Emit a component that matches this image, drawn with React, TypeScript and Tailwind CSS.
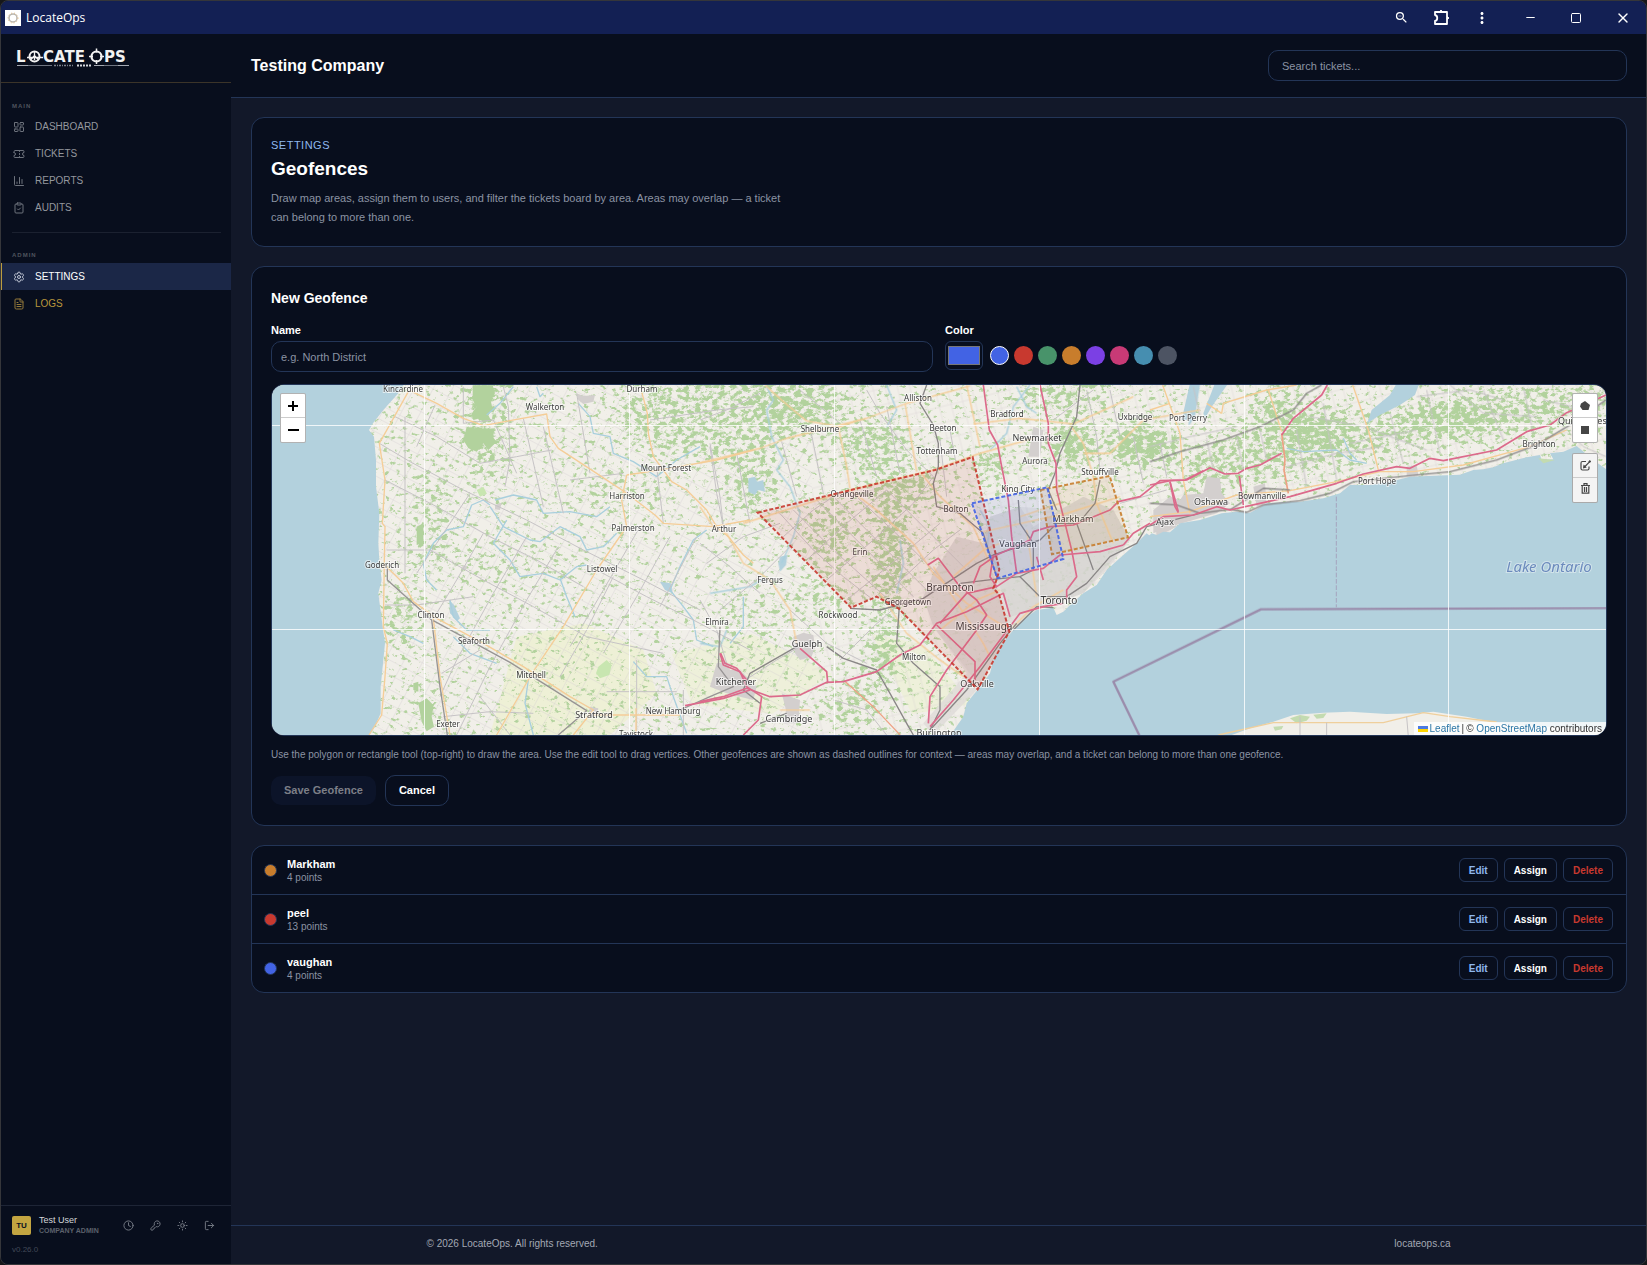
import { useState } from 'react';
import {
  ChartColumn,
  ClipboardCheck,
  Clock,
  FileText,
  KeyRound,
  LayoutDashboard,
  LogOut,
  Minus,
  Settings,
  Square,
  Sun,
  Ticket,
  X,
} from 'lucide-react';
import { MdMoreVert, MdZoomOut } from 'react-icons/md';

const swatches = [
  { name: 'Blue', cls: 'bg-[#4263e4]' },
  { name: 'Red', cls: 'bg-[#c8392f]' },
  { name: 'Green', cls: 'bg-[#48936a]' },
  { name: 'Orange', cls: 'bg-[#c87d2c]' },
  { name: 'Purple', cls: 'bg-[#7b40e4]' },
  { name: 'Pink', cls: 'bg-[#c83a76]' },
  { name: 'Teal', cls: 'bg-[#468eb0]' },
  { name: 'Gray', cls: 'bg-[#4d5463]' },
];

const geofences = [
  { name: 'Markham', points: 4, dot: 'bg-[#c87d2c]' },
  { name: 'peel', points: 13, dot: 'bg-[#c8392f]' },
  { name: 'vaughan', points: 4, dot: 'bg-[#4263e4]' },
];

const mainNav = [
  { label: 'Dashboard', icon: LayoutDashboard },
  { label: 'Tickets', icon: Ticket },
  { label: 'Reports', icon: ChartColumn },
  { label: 'Audits', icon: ClipboardCheck },
];

// [name, x, y, font size]
const places: [string, number, number, number][] = [
  ['Kincardine', 131, 5, 8],
  ['Durham', 370, 5, 8],
  ['Walkerton', 273, 23, 8],
  ['Mount Forest', 394, 84, 8],
  ['Harriston', 355, 112, 8],
  ['Palmerston', 361, 144, 8],
  ['Arthur', 452, 145, 8],
  ['Goderich', 110, 181, 8],
  ['Listowel', 330, 185, 8],
  ['Clinton', 159, 231, 8],
  ['Elmira', 445, 238, 8],
  ['Seaforth', 202, 257, 8],
  ['Mitchell', 259, 291, 8],
  ['Kitchener', 464, 298, 9],
  ['Stratford', 322, 331, 9],
  ['New Hamburg', 401, 327, 8],
  ['Exeter', 176, 340, 8],
  ['Tavistock', 364, 350, 8],
  ['Alliston', 646, 14, 8],
  ['Bradford', 735, 30, 8],
  ['Shelburne', 548, 45, 8],
  ['Beeton', 671, 44, 8],
  ['Newmarket', 765, 54, 9],
  ['Uxbridge', 863, 33, 8],
  ['Port Perry', 916, 34, 8],
  ['Tottenham', 665, 67, 8],
  ['Aurora', 763, 77, 8],
  ['Stouffville', 828, 88, 8],
  ['King City', 746, 105, 8],
  ['Orangeville', 580, 110, 8],
  ['Bolton', 684, 125, 8],
  ['Markham', 801, 135, 9],
  ['Vaughan', 746, 160, 9],
  ['Ajax', 893, 138, 9],
  ['Erin', 588, 168, 8],
  ['Fergus', 498, 196, 8],
  ['Brampton', 678, 204, 10],
  ['Georgetown', 636, 218, 8],
  ['Rockwood', 566, 231, 8],
  ['Toronto', 787, 217, 10],
  ['Mississauga', 712, 243, 10],
  ['Guelph', 535, 260, 9],
  ['Milton', 642, 273, 8],
  ['Oakville', 705, 300, 9],
  ['Cambridge', 517, 335, 9],
  ['Burlington', 667, 349, 9],
  ['Oshawa', 939, 118, 9],
  ['Bowmanville', 990, 112, 8],
  ['Port Hope', 1105, 97, 8],
  ['Brighton', 1267, 60, 8],
  ['Quinte West', 1312, 37, 9],
];

// Each sheet has its own origin, three units to a map pixel.
const WEST = 'scale(0.33333) translate(-66 -372)';
const MID = 'scale(0.33333) translate(1284 -222)';
const EAST = 'scale(0.33333) translate(2634 -42)';

function Roads({ sheet, lines, color, width }: { sheet: string; lines: string[]; color: string; width: number }) {
  return (
    <g transform={sheet} fill="none" stroke={color} strokeWidth={width} strokeLinejoin="round">
      {lines.map((l) => (
        <polyline key={l} points={l} />
      ))}
    </g>
  );
}

const westOrange = [
  '475,395 388,550 405,660 397,790 405,800 403,900 400,1100 412,1150 405,1250 395,1365 357,1425',
  '480,392 560,430 640,475 700,497 800,478 890,462 900,530 925,565 1040,640 1130,700 1215,765 1240,790 1390,800 1500,780',
  '1175,395 1192,460 1195,520 1210,590 1240,630 1265,665 1310,690 1370,750 1400,800 1435,830 1480,885 1510,910',
  '1130,645 1240,628 1400,600 1510,570',
  '1130,645 1115,720 1130,800 1040,930 940,1100 843,1245 740,1425',
  '410,920 460,970 490,1025 560,1075 700,1150 820,1220 960,1310 1030,1350 970,1425',
  '550,1075 570,1250 600,1425',
  '1030,1365 1290,1365',
  '1158,1345 1158,1425',
];
const westGray = [
  '640,380 640,490 730,480 800,640',
  '435,470 560,530 690,610 800,590 905,570',
  '388,550 480,605 640,690 830,780 1000,870 1180,960 1350,1050',
  '405,660 560,740 720,830 860,900 1000,980',
  '820,475 880,740',
  '880,500 940,760',
  '980,400 1020,640',
  '760,380 775,440 780,600 765,680',
  '555,435 500,560',
  '660,700 560,850 500,940',
  '700,820 620,960 560,1060',
  '830,830 730,1000 620,1200 570,1310',
  '925,860 830,1020 720,1220 620,1425',
  '1040,930 1190,1010 1330,1080 1500,1170',
  '540,870 700,960 850,1040 1010,1130 1240,1180',
  '405,1035 500,1035 670,1010',
  '410,870 540,870',
  '465,470 465,940',
  '1170,800 1060,990 960,1160',
  '1260,830 1160,1010 1060,1180',
  '1340,830 1230,1040',
  '690,1310 780,1425',
  '1090,950 1010,1110 930,1250',
  '1380,560 1400,700 1420,800',
  '1160,1200 1160,1420',
  '1220,620 1240,790',
  '960,660 1120,640',
  '1070,1295 1280,1295',
  '575,1240 690,1170',
  '1300,1290 1300,1425',
  '580,1370 720,1355 850,1360',
  '1200,480 1400,450 1510,440',
];
const westRail = [
  '412,925 412,960 545,1080 570,1280 592,1425',
  '550,1082 780,1207 1010,1352 925,1425',
  '1410,1100 1405,1220 1450,1280 1380,1310 1290,1350',
];
const westRivers = [
  '720,735 700,720 665,735 640,800 590,810 550,850 520,910 530,960 560,990',
  '720,740 760,800 840,840 870,845 930,800 990,830 1010,870 1060,860 1100,820',
  '735,720 790,705 860,720 880,760 960,755 1040,770 1080,740',
  '770,780 730,850 780,900 810,950 880,940 930,960 980,920 1010,915',
  '860,380 870,410 880,400',
  '985,430 1020,470 1030,520 1080,530 1090,580 1150,605 1220,650 1280,600 1350,560',
  '790,380 750,430 710,465',
  '1370,810 1330,840 1290,920 1260,990 1300,1040 1330,1080 1340,1140 1390,1160',
  '930,955 950,1010 975,1070',
  '600,1020 610,1070 650,1110 720,1110',
  '430,1110 480,1130 520,1150',
  '610,1130 660,1180 740,1210',
  '835,1260 825,1330 850,1425',
  '1150,1205 1190,1250 1250,1250 1270,1310 1310,1420',
  '1480,1010 1480,1100 1440,1150',
];

const midOrange = [
  '195,225 250,275 320,333 420,350 480,330',
  '0,458 180,415 260,385 500,325 620,280 810,228',
  '415,350 440,470 450,535',
  '615,280 650,485',
  '800,225 840,410',
  '820,342 960,325 1120,342 1300,260',
  '130,640 450,540 700,480 840,430 1000,385',
  '0,590 40,650 80,670 130,760 210,810 270,900 290,1000',
  '450,540 530,600 640,700 700,790 800,880 930,960',
  '660,485 720,560 820,650 870,760',
  '540,850 620,970 720,1050 790,1100',
  '850,665 1100,610 1260,560',
  '1150,430 1230,430 1330,330 1500,300',
  '1110,345 1150,400 1180,500 1190,580 1240,700',
  '720,960 830,870 900,840',
  '760,800 850,720 900,700',
  '700,770 850,1000 870,1040',
  '930,960 1000,890 1090,840',
  '980,660 1010,860',
  '960,620 1080,580',
  '240,1200 330,1200',
];
const midGray = [
  '0,330 80,300 180,250',
  '30,400 60,560 70,650',
  '110,430 150,640',
  '245,395 290,560',
  '330,350 370,550',
  '480,330 530,500',
  '560,290 600,490',
  '300,240 420,340',
  '500,240 540,310 620,420 700,500',
  '0,700 90,770 180,850',
  '20,760 130,680 240,640',
  '60,900 180,800 280,700',
  '230,600 340,720 430,800 520,870',
  '280,600 400,720 600,900',
  '350,570 480,700 640,860',
  '400,560 560,720 690,850',
  '470,560 620,700 740,820',
  '560,540 700,680 800,780',
  '250,680 340,600 400,560',
  '320,750 440,640 560,540',
  '380,810 520,690 640,580 700,500',
  '440,870 600,740 720,640',
  '560,850 700,720 780,660',
  '750,360 770,470',
  '720,390 740,560',
  '1160,240 1190,380 1200,480',
  '1230,240 1260,380',
  '1300,380 1330,520',
  '1380,400 1400,500',
  '1260,580 1400,540',
  '1060,330 1180,240',
  '0,870 50,960 80,1060',
  '120,1120 230,1050 300,1010',
  '270,900 380,1000 500,1060',
  '420,1050 520,950 600,880',
  '400,1170 500,1200 560,1275',
];
const midRail = [
  '680,225 660,280 700,345 715,400 715,470 700,520 710,590 780,610 850,670 880,770 892,805',
  '1140,225 1130,320 1080,430 1065,490 1045,540 1070,600',
  '955,570 960,640 1000,700 1000,780 960,800 1020,860 1100,860 1160,820 1230,740 1310,700 1340,650 1500,610',
  '380,1010 430,1045 530,1080 570,1150 620,1240 640,1275',
  '598,890 590,1000 640,1060 720,1130 720,1200 690,1260',
  '450,895 540,900 670,865 830,760 880,735 1020,690 1060,650',
  '1060,640 1130,640 1180,780',
  '1135,640 1185,580 1200,510',
  '780,820 880,808 960,800',
  '940,960 1010,890 1060,893',
  '690,1260 800,1140 900,1000 950,940',
  '180,1180 130,1140 150,1090 290,1010',
  '260,1210 180,1240',
];
const midPink = [
  '850,225 868,360 893,405 905,470 925,570 935,680 950,790',
  '1020,225 1045,340 1045,400 1068,460 1070,540 1090,620 1115,720 1130,800 1100,840 1100,870',
  '1510,482 1455,510 1380,512 1320,560 1255,575 1230,600 1120,645 1050,650 1000,665 990,690 890,735 840,770 820,820',
  '1270,705 1200,725 1080,735 1030,775 950,790 890,830 870,800 880,735',
  '1270,705 1300,670 1350,640',
  '0,1175 70,1160 140,1135 210,1160 300,1155 380,1117 430,1115 530,1085 600,1035 660,1005 710,940 800,905 910,850 930,920',
  '60,1030 70,1065 120,1085 140,1130 185,1160 175,1230 130,1275',
  '300,1015 380,1085 383,1117',
  '683,765 715,745 780,830 830,870 860,915 830,960 740,1080 690,1160 685,1240',
  '690,1250 760,1170 840,1070 900,990 960,910 1030,890 1090,880',
  '710,945 825,1055 825,1110',
  '890,830 800,850 720,940',
  '1010,740 1030,810',
  '1410,515 1435,605',
];
const midRivers = [
  '200,230 220,270 200,300 215,380 250,450 230,480 270,530 300,610 280,680 245,760',
  '560,225 590,300 560,350',
  '870,420 920,370 940,290 990,225',
  '950,230 980,290 1010,310',
  '600,690 610,760 590,850',
  '0,1000 60,1010 80,960',
  '30,850 150,830 200,800',
  '840,600 870,650 860,720 900,780',
];

const eastOrange = [
  '38,45 90,190 100,330 120,430',
  '0,120 60,100',
  '215,130 220,100 350,60 440,45',
  '355,60 395,185',
  '608,45 655,180 685,300',
  '0,440 120,425 260,375 420,362 560,335 690,305 790,305 940,285 1140,230 1250,180',
  '170,100 215,130',
];
const eastGray = [
  '130,50 150,140',
  '170,210 190,300',
  '0,230 120,200 260,170',
  '260,200 280,300',
  '330,180 350,270',
  '440,180 470,350',
  '520,100 560,330',
  '410,290 560,250 700,230',
  '480,140 640,170 830,240',
  '720,130 760,280',
  '830,60 870,250',
  '900,45 1000,130 1160,140',
  '800,80 960,60 1060,90',
  '1000,60 1060,210',
  '1120,50 1150,190',
  '1180,90 1350,130',
  '1260,190 1300,230 1368,260',
  '600,220 800,180',
];
const eastRail = [
  '0,275 90,245 220,210 330,170 430,120 470,70 515,45',
  '0,400 80,405 150,430 240,418 290,427 340,405 450,392 540,370 610,335 770,318 900,305 1040,270 1160,225 1260,165 1368,90',
  '240,420 340,355 420,360',
];
const eastPink = [
  '0,345 60,332 110,330 180,293 225,312 265,310 290,295 330,285 395,250',
  '532,45 515,75 430,145 395,195',
  '60,335 75,410 85,428',
  '268,318 280,405',
  '0,465 40,440 130,435 200,410 240,420 330,400 420,380 560,340 640,312 740,290 780,295 840,265 880,272 1040,240 1130,185 1200,165 1250,128 1368,75',
];

function MapCanvas() {
  return (
    <svg
      viewBox="0 1 1334 350"
      preserveAspectRatio="xMidYMid slice"
      className="block h-full w-full"
      role="img"
      aria-label="Map of southern Ontario"
    >
      <defs>
        {/* turns soft density shapes into speckled woodland */}
        <filter id="woods" x="0" y="0" width="1334" height="352" filterUnits="userSpaceOnUse" colorInterpolationFilters="sRGB">
          <feTurbulence type="fractalNoise" baseFrequency="0.17 0.23" numOctaves="4" seed="8" result="noise" />
          <feColorMatrix in="noise" type="matrix" values="0 0 0 0 0  0 0 0 0 0  0 0 0 0 0  1 0 0 0 0" result="n" />
          <feComposite in="n" in2="SourceAlpha" operator="arithmetic" k1="0" k2="1" k3="0.34" k4="0" result="sum" />
          <feColorMatrix in="sum" type="matrix" values="0 0 0 0 0.698  0 0 0 0 0.824  0 0 0 0 0.616  0 0 0 7 -4.5" />
        </filter>
        <filter id="soft" x="-50%" y="-50%" width="200%" height="200%">
          <feGaussianBlur stdDeviation="10" />
        </filter>
        <pattern id="farm" width="17" height="13" patternUnits="userSpaceOnUse" patternTransform="rotate(28)">
          <path d="M0 6.5h17M8.5 0v13" stroke="#d2cdd0" strokeWidth="0.5" fill="none" />
        </pattern>
        <pattern id="farmEast" width="12" height="16" patternUnits="userSpaceOnUse" patternTransform="rotate(-14)">
          <path d="M0 8h12M6 0v16" stroke="#d2cdd0" strokeWidth="0.5" fill="none" />
        </pattern>
        <pattern id="streets" width="5" height="5" patternUnits="userSpaceOnUse" patternTransform="rotate(-15)">
          <path d="M0 2.5h5M2.5 0v5" stroke="#bdb9b9" strokeWidth="0.6" fill="none" />
        </pattern>
        <pattern id="streetsPeel" width="6" height="5" patternUnits="userSpaceOnUse" patternTransform="rotate(42)">
          <path d="M0 2.5h6M3 0v5" stroke="#bdb9b9" strokeWidth="0.6" fill="none" />
        </pattern>
      </defs>

      <rect width="1334" height="352" fill="#f1efe9" />
      <path transform={WEST} fill="#eef0d6" d="M800 1130L1000 1090L1180 1170L1220 1300L1080 1425H720Z" />
      <path fill="#eef0d6" d="M400 270L480 250L560 290L500 330L420 320Z M600 250L650 260L700 320L640 330Z" opacity="0.8" />

      <rect width="540" height="352" fill="url(#farm)" opacity="0.7" />
      <rect x="540" width="794" height="352" fill="url(#farmEast)" opacity="0.7" />

      <g filter="url(#woods)">
        <rect width="1334" height="352" fill="#000" opacity="0.12" />
        <g filter="url(#soft)">
          <ellipse cx="440" cy="30" rx="100" ry="45" opacity="0.5" />
          <ellipse cx="215" cy="40" rx="24" ry="60" opacity="0.5" />
          <ellipse cx="160" cy="140" rx="18" ry="60" opacity="0.4" />
          <ellipse cx="240" cy="180" rx="70" ry="20" opacity="0.2" />
          <ellipse cx="350" cy="110" rx="50" ry="20" opacity="0.3" />
          <ellipse cx="480" cy="100" rx="22" ry="32" opacity="0.6" />
          <ellipse cx="530" cy="20" rx="50" ry="26" opacity="0.6" />
          <ellipse cx="600" cy="60" rx="40" ry="26" opacity="0.6" />
          <ellipse cx="630" cy="105" rx="40" ry="14" opacity="0.8" />
          <ellipse cx="618" cy="170" rx="14" ry="56" opacity="0.9" />
          <ellipse cx="560" cy="150" rx="24" ry="34" opacity="0.6" />
          <ellipse cx="612" cy="265" rx="12" ry="40" opacity="0.9" />
          <ellipse cx="580" cy="320" rx="30" ry="24" opacity="0.5" />
          <ellipse cx="550" cy="215" rx="30" ry="14" opacity="0.5" />
          <ellipse cx="480" cy="240" rx="40" ry="40" opacity="0.2" />
          <ellipse cx="800" cy="60" rx="24" ry="20" opacity="1" />
          <ellipse cx="870" cy="60" rx="36" ry="20" opacity="1" />
          <ellipse cx="720" cy="80" rx="16" ry="16" opacity="0.8" />
          <ellipse cx="790" cy="10" rx="50" ry="20" opacity="0.5" />
          <path d="M900 80L1000 20L1100 30L1250 0H1334V40L1150 60L1030 90L920 110Z" opacity="0.55" />
          <ellipse cx="1040" cy="46" rx="34" ry="16" opacity="1" />
          <ellipse cx="1180" cy="34" rx="50" ry="12" opacity="1" />
          <ellipse cx="1000" cy="20" rx="20" ry="12" opacity="0.8" />
          <ellipse cx="1040" cy="338" rx="40" ry="9" opacity="0.5" />
          <ellipse cx="130" cy="235" rx="12" ry="30" opacity="0.7" />
          <ellipse cx="155" cy="325" rx="6" ry="20" opacity="0.8" />
        </g>
      </g>
      <path
        transform={WEST}
        fill="#b2d29d"
        d="M668 376H728L735 400L722 420L728 450L715 465L722 480L700 490L690 475L670 480L664 462L680 440L668 420Z M650 500L690 508L735 505L728 530L740 545L715 570L700 550L680 575L655 565L640 540Z M490 1270L505 1265L505 1295L490 1290Z M505 1330L530 1315L550 1335L545 1370L552 1400L530 1414L515 1385Z M500 800L520 790L520 850L500 855Z"
      />
      <path transform={WEST} fill="#c8e6b0" d="M1045 1220L1070 1200L1085 1215L1078 1245L1050 1255L1038 1240Z M680 690L700 680L710 700L690 710Z" />

      {/* built-up areas */}
      <g>
        <path
          transform={MID}
          fill="#dfdbd8"
          opacity="0.8"
          d="M850 700L870 620L960 590L1000 650L1080 600L1150 560L1240 600L1290 690L1220 780L1150 850L1010 900L940 960L880 1050L840 1130L700 1275L670 1240L800 1090L700 950L670 860L700 790L770 680Z"
        />
        <path transform={MID} fill="url(#streets)" d="M850 700L870 620L960 590L1080 600L1150 560L1240 600L1290 690L1150 850L1010 900L930 920L890 800Z" />
        <path transform={MID} fill="url(#streetsPeel)" d="M770 680L850 700L930 960L840 1130L700 950L670 860L700 790Z" />
        <path transform={MID} fill="#d3cfce" d="M50 1060L80 1055L90 1080L120 1080L170 1130L160 1170L120 1160L80 1150L30 1130Z M280 980L310 968L340 975L345 1010L335 1040L300 1050L285 1030Z M245 1150L270 1160L300 1170L295 1240L250 1240L258 1200Z M1000 350L1030 360L1020 440L985 440Z M1365 630L1420 600L1430 650L1370 680Z" />
        <path transform={EAST} fill="#d3cfce" d="M10 420L60 380L90 390L100 375L160 370L170 320L210 325L215 370L240 400L200 430L60 470L10 490Z M310 350L345 340L350 400L320 410Z M770 290L800 285L805 315L770 318Z" />
        <path transform={WEST} fill="#d3cfce" d="M980 400L1000 408L1035 405L1030 425L1000 432L985 420Z M735 735L755 728L750 750L735 748Z M1020 1340L1045 1345L1040 1375L1015 1370Z M638 915L652 918L648 930L636 928Z" />
      </g>

      <g fill="#b3d1dd">
        <path
          transform={WEST}
          d="M60 368H465L445 400L400 450L370 488L357 510L372 530L378 600L378 680L388 760L385 850L388 900L395 960L385 1000L398 1100L405 1150L400 1200L392 1280L392 1360L375 1400L355 1430H60Z"
        />
        <path
          transform={MID}
          d="M745 1285L790 1220L800 1180L840 1130L870 1090L880 1050L900 1010L940 960L975 925L1010 900L1060 893L1070 915L1090 905L1105 890L1150 850L1190 825L1220 780L1270 735L1310 700L1340 670L1362 687L1362 1285Z"
        />
        <path
          transform={EAST}
          d="M-10 503L5 490L20 495L40 485L60 487L90 460L150 450L215 430L260 425L300 428L320 418L350 400L420 395L450 395L520 385L570 370L600 345L660 345L720 335L780 320L850 317L930 314L970 300L1000 298L1030 292L1060 280L1130 262L1170 255L1175 270L1210 268L1200 250L1240 245L1280 228L1330 270L1372 300V1110H-10Z"
        />
        <path transform={EAST} d="M120 40H145L125 110L110 150L95 150Z M195 40H235L185 110L165 145L160 130Z M740 40H808L795 75L750 105L690 135L652 160L665 120L720 75Z" />
        <path transform={MID} d="M145 505L165 500L172 515L190 510L195 545L175 540L165 555L145 545Z M240 740L262 735L258 765L240 785L235 760Z M1475 225H1500L1485 320L1465 350Z" />
        <path transform={WEST} d="M598 1020L612 1035L630 1075L622 1082L600 1060Z M1230 965L1262 970L1268 1000L1245 990Z" />
      </g>
      <path
        transform={EAST}
        fill="#f1efe9"
        d="M205 1110L300 1075L370 1055L430 1035L520 1028L600 1025L710 1032L800 1030L850 1025L950 1040L1040 1058L1140 1068L1372 1080V1110Z"
      />
      <path transform={EAST} fill="#c3dbb0" d="M420 1045L450 1035L480 1040L470 1052L440 1060Z M490 1034L530 1030L520 1044L500 1046Z M370 1070L400 1068L395 1078L375 1082Z M1165 265L1215 270L1180 280Z" />

      <Roads sheet={WEST} lines={westRivers} color="#a9cfdd" width={4} />
      <Roads sheet={MID} lines={midRivers} color="#a9cfdd" width={4} />
      <Roads sheet={EAST} lines={['410,235 460,245 560,240 600,270 650,280', '580,205 600,250 620,270']} color="#a9cfdd" width={4} />
      <Roads sheet={WEST} lines={westGray} color="#c6c3c5" width={3} />
      <Roads sheet={MID} lines={midGray} color="#c6c3c5" width={3} />
      <Roads sheet={EAST} lines={eastGray} color="#c6c3c5" width={3} />
      <Roads sheet={WEST} lines={westOrange} color="#f5cd97" width={4} />
      <Roads sheet={MID} lines={midOrange} color="#f5cd97" width={4} />
      <Roads sheet={EAST} lines={eastOrange} color="#f5cd97" width={4} />
      <Roads sheet={EAST} lines={['205,1095 370,1058 700,1058 820,1028 900,1040 1040,1056']} color="#efcf9c" width={4} />
      <Roads sheet={EAST} lines={['450,1040 450,1100', '530,1058 530,1100', '770,1040 775,1100']} color="#c6c3c5" width={3} />
      <Roads sheet={MID} lines={['436,1115 520,1190 605,1280']} color="#eea184" width={4} />
      <Roads sheet={EAST} lines={['395,190 405,270 402,300 415,370']} color="#eea184" width={5} />
      <Roads sheet={WEST} lines={westRail} color="#979494" width={4} />
      <Roads sheet={MID} lines={midRail} color="#898686" width={4} />
      <Roads sheet={EAST} lines={eastRail} color="#898686" width={4} />
      <Roads sheet={WEST} lines={['1412,1180 1425,1210 1460,1225 1490,1260', '1305,1337 1420,1315 1500,1290']} color="#dc6a8b" width={5} />
      <Roads sheet={MID} lines={midPink} color="#dc6a8b" width={5} />
      <Roads sheet={EAST} lines={eastPink} color="#dc6a8b" width={5} />

      {/* borders on the lake */}
      <Roads sheet={EAST} lines={['-30,1100 -110,935 333,718 1372,714']} color="#9b8dac" width={7} />
      <path transform={EAST} d="M559 380V712" stroke="#9b8dac" strokeWidth="2" strokeDasharray="14 5" />

      {/* tile seams */}
      <path
        d="M152.500 0V352M357.500 0V352M562.500 0V352M767.500 0V352M972.500 0V352M1176.500 0V352M0 41.500H1334M0 245.500H1334"
        stroke="#fff"
        strokeOpacity="0.8"
        fill="none"
      />

      <g
        fontFamily='"Noto Sans", sans-serif'
        textAnchor="middle"
        fill="#3c3c3c"
        stroke="#fff"
        strokeOpacity="0.6"
        strokeWidth="2"
        paintOrder="stroke"
      >
        {places.map(([name, x, y, size]) => (
          <text key={name + x} x={x} y={y + 3} fontSize={size}>
            {name}
          </text>
        ))}
        <text x="1277" y="188" fontSize="15" fontStyle="italic" fill="#6c8bbd" strokeOpacity="0.4">
          Lake Ontario
        </text>
      </g>

      <g transform={MID} strokeWidth="6" strokeDasharray="12 6" fillOpacity="0.1" strokeOpacity="0.9">
        <polygon points="1022,540 1229,498 1284,682 1056,733" stroke="#c87d2c" fill="#c87d2c" />
        <polygon
          points="173,608 535,520 705,480 818,441 898,778 892,803 880,835 897,853 928,965 833,1138 595,895 530,860 453,893"
          stroke="#c8392f"
          fill="#c8392f"
        />
        <polygon points="816,580 1042,532 1090,747 892,805" stroke="#4263e4" fill="#4263e4" />
      </g>
    </svg>
  );
}

function Logo() {
  return (
    <svg
      width="114"
      height="20"
      viewBox="0 0 114 20"
      className="overflow-visible"
      aria-label="LocateOps"
      role="img"
      fill="none"
      stroke="#f2f2f2"
    >
      <g fill="#f2f2f2" stroke="none" fontFamily='"DejaVu Sans", sans-serif' fontWeight="700" fontSize="15">
        <text x="0" y="14">
          L
        </text>
        <text x="27" y="14">
          CATE
        </text>
        <text x="88" y="14">
          PS
        </text>
      </g>
      <circle cx="18.500" cy="8.500" r="5" strokeWidth="2" />
      <path d="M11 9.500H27M18.500 4V12M15 11.500L18.500 7.500L22 11.500" strokeWidth="1.300" />
      <circle cx="80.500" cy="8.500" r="5" strokeWidth="2.200" />
      <path d="M80.500 0.500V4.500M80.500 12V16M73 8.500H77M84 8.500H88" strokeWidth="1.500" />
      <path d="M1 17.500H12M78 17.500H88M102 17.500H113" stroke="#a5a9b2" />
      <path d="M12 17.500H36M88 17.500H102" stroke="#6f7582" />
      <path d="M38 17.500H58" stroke="#7d828e" strokeWidth="1.500" strokeDasharray="2 1 1 1" />
      <path d="M61 17.500H76" stroke="#d5d8dd" strokeWidth="2" strokeDasharray="2 1" />
    </svg>
  );
}

function NavItem({ label, icon: Icon }: { label: string; icon: any }) {
  return (
    <a href="#" className="flex h-[27px] items-center gap-[10px] pl-3 text-[10px] uppercase text-[#94979d]">
      <Icon size={12} strokeWidth={2} className="text-[#6d727c]" />
      {label}
    </a>
  );
}

function Sidebar() {
  return (
    <aside className="flex w-[230px] shrink-0 flex-col bg-[#080e1d]">
      <div className="flex h-[49px] items-center border-b border-[#3b3429] pl-[15px]">
        <Logo />
      </div>
      <nav className="flex-1 pt-[18px]">
        <p className="mb-[2px] pl-[11px] text-[6px] leading-[10px] font-bold tracking-[1px] text-[#4f545e]">MAIN</p>
        {mainNav.map((n) => (
          <NavItem key={n.label} label={n.label} icon={n.icon} />
        ))}
        <hr className="mt-[11px] mr-[10px] mb-[17px] ml-[11px] border-[#1b2130]" />
        <p className="mb-[3px] pl-[11px] text-[6px] leading-[10px] font-bold tracking-[1px] text-[#4f545e]">ADMIN</p>
        <a
          href="#"
          aria-current="page"
          className="flex h-[27px] items-center gap-[10px] border-l border-[#bb9c40] bg-[#1b2747] pl-[11px] text-[10px] text-white"
        >
          <Settings size={12} strokeWidth={2} className="text-[#c0c6d4]" />
          SETTINGS
        </a>
        <a href="#" className="flex h-[27px] items-center gap-[10px] pl-3 text-[10px] text-[#b8963c]">
          <FileText size={12} strokeWidth={2} className="text-[#94793a]" />
          LOGS
        </a>
      </nav>
      <div className="border-t border-[#1e2536] pt-[9px] pb-[9px] pl-[11px]">
        <div className="flex items-center">
          <span className="flex h-[19px] w-[19px] items-center justify-center rounded-xs bg-[#c3a541] text-[8px] font-bold text-[#0c1222]">
            TU
          </span>
          <div className="ml-2 w-[76px]">
            <p className="text-[9px] leading-[11px] text-[#d5d7da]">Test User</p>
            <p className="text-[7px] leading-[10px] font-bold whitespace-nowrap text-[#5c616c]">COMPANY ADMIN</p>
          </div>
          <div className="ml-2 flex gap-4 text-[#7b808a]">
            <button aria-label="History">
              <Clock size={11} strokeWidth={2} />
            </button>
            <button aria-label="Change password">
              <KeyRound size={11} strokeWidth={2} />
            </button>
            <button aria-label="Toggle theme">
              <Sun size={11} strokeWidth={2} />
            </button>
            <button aria-label="Sign out">
              <LogOut size={11} strokeWidth={2} />
            </button>
          </div>
        </div>
        <p className="mt-[9px] text-[8px] leading-[10px] text-[#424957]">v0.26.0</p>
      </div>
    </aside>
  );
}

export default function App() {
  const [name, setName] = useState('');
  const [selected, setSelected] = useState('Blue');

  return (
    <div className="bg-[#16171a]">
      <div className="flex min-h-screen flex-col overflow-hidden rounded-lg border border-[#35363a] bg-[#121829] font-['Liberation_Sans',Arial,sans-serif] text-white">
        <div className="flex h-[33px] shrink-0 items-center bg-[#132054] pl-1">
          <span className="flex h-4 w-4 items-center justify-center bg-white">
            <svg width="12" height="12" viewBox="0 0 12 12" fill="none">
              <circle cx="6" cy="6" r="4" stroke="#b9b5ae" strokeWidth="1.500" />
              <circle cx="6" cy="6" r="5" stroke="#e0b982" strokeWidth="1" strokeDasharray="1 2" />
            </svg>
          </span>
          <span className="ml-[5px] flex-1 font-['Open_Sans',sans-serif] text-[12px]">LocateOps</span>
          <div className="flex items-center pr-[15px]">
            <button aria-label="Zoom" className="mr-6">
              <MdZoomOut size={15} />
            </button>
            <button aria-label="Extensions" className="mr-[22px]">
              <svg width="18" height="18" viewBox="0 0 18 18" fill="none" stroke="#fff" strokeWidth="1.800" strokeLinejoin="round">
                <path d="M2 3H14V15H2V12C5 11.500 5 6.500 2 6Z" />
                <path d="M6.500 2.500Q8 0 9.500 2.500ZM14.500 7.500Q17 9 14.500 10.500Z" fill="#fff" strokeWidth="1" />
              </svg>
            </button>
            <button aria-label="More" className="mr-[33px]">
              <MdMoreVert size={18} />
            </button>
            <button aria-label="Minimize" className="mr-[33px]">
              <Minus size={13} strokeWidth={2} />
            </button>
            <button aria-label="Maximize" className="mr-[33px]">
              <Square size={12} strokeWidth={2} />
            </button>
            <button aria-label="Close">
              <X size={16} strokeWidth={2} />
            </button>
          </div>
        </div>

        <div className="flex flex-1">
          <Sidebar />

          <div className="flex min-w-0 flex-1 flex-col">
            <header className="flex items-center justify-between border-b border-[#233557] bg-[#080e1d] py-4 pr-[19px] pl-5">
              <h1 className="text-[16px] leading-6 font-bold">Testing Company</h1>
              <input
                type="search"
                aria-label="Search tickets"
                placeholder="Search tickets..."
                className="h-[31px] w-[359px] rounded-[10px] border border-[#233557] bg-transparent px-[13px] text-[11px] placeholder:text-[#8b93a3]"
              />
            </header>

            <main className="flex flex-1 flex-col gap-[19px] pt-[19px] pr-[19px] pb-5 pl-5">
              <section className="rounded-[13px] border border-[#233557] bg-[#080e1d] p-[19px]">
                <p className="text-[11px] leading-4 tracking-[0.5px] text-[#8fb8ee]">SETTINGS</p>
                <h2 className="mt-1 text-[19px] leading-6 font-bold">Geofences</h2>
                <p className="mt-2 max-w-[520px] text-[11px] leading-[19px] text-[#8b93a3]">
                  Draw map areas, assign them to users, and filter the tickets board by area. Areas may overlap — a ticket
                  can belong to more than one.
                </p>
              </section>

              <section className="rounded-[13px] border border-[#233557] bg-[#080e1d] p-[19px]">
                <h3 className="text-[14px] leading-6 font-bold">New Geofence</h3>
                <div className="mt-[11px] grid grid-cols-2 gap-3">
                  <div>
                    <label htmlFor="fence-name" className="mb-[2px] block text-[11px] leading-[18px] font-bold">
                      Name
                    </label>
                    <input
                      id="fence-name"
                      type="text"
                      value={name}
                      onChange={(e) => setName(e.target.value)}
                      placeholder="e.g. North District"
                      className="block h-[31px] w-full rounded-[10px] border border-[#233557] bg-transparent px-[9px] text-[11px] placeholder:text-[#8b93a3]"
                    />
                  </div>
                  <div>
                    <label htmlFor="fence-color" className="mb-[2px] block text-[11px] leading-[18px] font-bold">
                      Color
                    </label>
                    <div className="flex items-center gap-[5px]">
                      <input
                        id="fence-color"
                        type="color"
                        defaultValue="#4263e4"
                        className="mr-[2px] h-[29px] w-[38px] rounded-md border border-[#233557] bg-transparent"
                      />
                      {swatches.map((s) => (
                        <button
                          key={s.name}
                          aria-label={s.name}
                          onClick={() => setSelected(s.name)}
                          className={`h-[19px] w-[19px] rounded-full ${s.cls} ${selected === s.name ? 'border border-white' : ''}`}
                        />
                      ))}
                    </div>
                  </div>
                </div>

                <div className="relative mt-3 h-[352px] overflow-hidden rounded-[13px] border border-[#233557]">
                  <MapCanvas />

                  <div className="absolute top-2 left-2 flex w-[26px] flex-col rounded-xs border border-black/30 bg-white font-bold text-black">
                    <button aria-label="Zoom in" className="flex h-6 items-center justify-center border-b border-[#ccc]">
                      <svg width="10" height="10" viewBox="0 0 10 10" stroke="#000" strokeWidth="2">
                        <path d="M0 5H10M5 0V10" />
                      </svg>
                    </button>
                    <button aria-label="Zoom out" className="flex h-6 items-center justify-center">
                      <svg width="11" height="10" viewBox="0 0 11 10" stroke="#000" strokeWidth="2">
                        <path d="M0 5H11" />
                      </svg>
                    </button>
                  </div>

                  <div className="absolute top-2 right-2 flex w-[26px] flex-col gap-[10px] text-[#464646]">
                    <div className="flex flex-col rounded-xs border border-black/30 bg-white">
                      <button aria-label="Draw a polygon" className="flex h-6 items-center justify-center border-b border-[#ccc]">
                        <svg width="10" height="10" viewBox="0 0 10 10" fill="currentColor">
                          <path d="M5 0L10 4L8.500 9H2.500L0 5.500L1 2.500Z" />
                        </svg>
                      </button>
                      <button aria-label="Draw a rectangle" className="flex h-6 items-center justify-center">
                        <svg width="8" height="8" viewBox="0 0 8 8" fill="currentColor">
                          <rect width="8" height="8" />
                        </svg>
                      </button>
                    </div>
                    <div className="flex flex-col rounded-xs border border-black/30 bg-[#f4f4f4]">
                      <button aria-label="Edit layers" className="flex h-6 items-center justify-center border-b border-[#ccc]">
                        <svg width="11" height="11" viewBox="0 0 11 11" fill="none" stroke="currentColor" strokeWidth="1.200">
                          <path d="M6 1.500H2.500Q1 1.500 1 3V8.500Q1 10 2.500 10H7.500Q9 10 9 8.500V6.500M4.500 7L9.500 1.800" />
                          <path d="M9 2.200L10.500 0.800" strokeWidth="2" />
                          <path d="M4 5.800L5.500 7.200L3.700 7.600Z" fill="currentColor" />
                        </svg>
                      </button>
                      <button aria-label="Delete layers" className="flex h-6 items-center justify-center pb-1">
                        <svg width="9" height="11" viewBox="0 0 9 11" fill="none" stroke="currentColor" strokeWidth="1.200">
                          <path d="M0 2.500H9M3 2.300V0.700H6V2.300M1.200 2.500V10.200H7.800V2.500M3.500 4V9M5.500 4V9" />
                        </svg>
                      </button>
                    </div>
                  </div>

                  <div className="absolute right-0 bottom-0 flex h-[13px] items-center gap-[2px] bg-white/80 px-1 text-[10px] leading-[13px] text-[#333]">
                    <svg width="10" height="6" viewBox="0 0 10 6" aria-hidden="true">
                      <rect width="10" height="3" fill="#4c7be1" />
                      <rect y="3" width="10" height="3" fill="#ffd500" />
                    </svg>
                    <a href="#" className="text-[#2b76a6]">
                      Leaflet
                    </a>
                    <span>|</span>
                    <span>
                      ©{' '}
                      <a href="#" className="text-[#2b76a6]">
                        OpenStreetMap
                      </a>{' '}
                      contributors
                    </span>
                  </div>
                </div>

                <p className="mt-[11px] text-[10px] leading-4 text-[#8b93a3]">
                  Use the polygon or rectangle tool (top-right) to draw the area. Use the edit tool to drag vertices. Other
                  geofences are shown as dashed outlines for context — areas may overlap, and a ticket can belong to more
                  than one geofence.
                </p>
                <div className="mt-3 flex items-center gap-[9px]">
                  <button disabled className="h-[29px] rounded-[10px] bg-[#0c1429] px-[13px] text-[11px] font-bold text-[#7c7f87]">
                    Save Geofence
                  </button>
                  <button className="h-[31px] rounded-[10px] border border-[#233557] px-[13px] text-[11px] font-bold">
                    Cancel
                  </button>
                </div>
              </section>

              <ul className="divide-y divide-[#233557] rounded-[13px] border border-[#233557] bg-[#080e1d]">
                {geofences.map((g) => (
                  <li key={g.name} className="flex h-[49px] items-center pr-[13px] pl-3 last:h-12">
                    <span className={`h-[13px] w-[13px] rounded-full border border-[#233557] ${g.dot}`} />
                    <div className="ml-[10px] flex-1">
                      <p className="text-[11px] leading-[14px] font-bold">{g.name}</p>
                      <p className="text-[10px] leading-[13px] text-[#8b93a3]">{g.points} points</p>
                    </div>
                    <div className="flex gap-[6px] text-[10px] font-bold">
                      <button className="h-6 rounded-md border border-[#233557] px-[9px] text-[#8fb8ee]">Edit</button>
                      <button className="h-6 rounded-md border border-[#233557] px-[9px]">Assign</button>
                      <button className="h-6 rounded-md border border-[#233557] px-[9px] text-[#c8392f]">Delete</button>
                    </div>
                  </li>
                ))}
              </ul>
            </main>

            <footer className="border-t border-[#233557]">
              <div className="mx-auto flex h-[38px] max-w-[1024px] items-center justify-between pb-[3px] text-[10px] text-[#a3a8b4]">
                <span>© 2026 LocateOps. All rights reserved.</span>
                <a href="#">locateops.ca</a>
              </div>
            </footer>
          </div>
        </div>
      </div>
    </div>
  );
}
